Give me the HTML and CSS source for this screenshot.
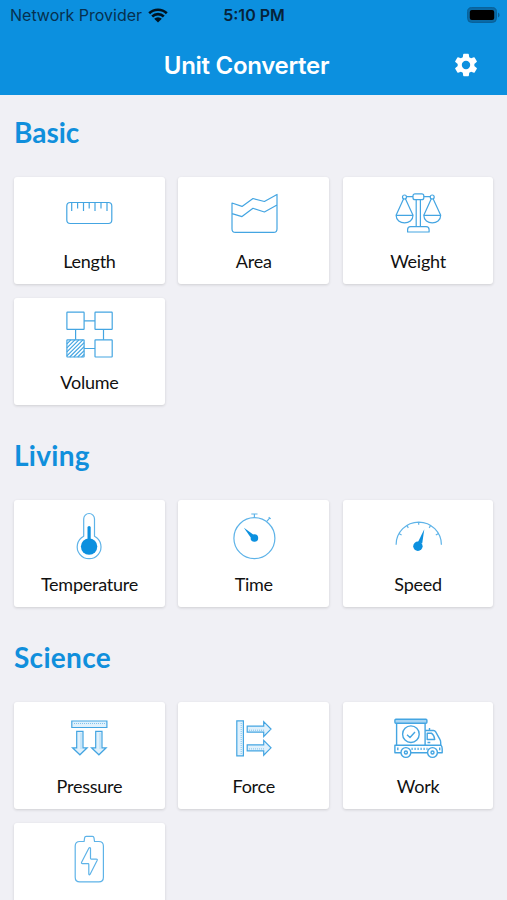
FILE: index.html
```
<!DOCTYPE html>
<html lang="en">

<head>
    <meta charset="UTF-8">
    <meta name="viewport" content="width=device-width, initial-scale=1">
    <title>Unit Converter</title>
    <link rel="stylesheet" href="styles.css">
</head>

<body>
    <header class="header">
        <div class="status-bar">
            <div class="carrier">
                <span class="carrier-name">Network Provider</span>
                <svg class="wifi" viewBox="0 0 20 15">
                    <path d="M1.2 5.3a12.6 12.6 0 0 1 17.6 0M4.2 8.5a8.3 8.3 0 0 1 11.6 0" />
                    <path class="solid" d="M6.2 10.8a5.4 5.4 0 0 1 7.6 0L10 14.6z" />
                </svg>
            </div>
            <span class="clock">5:10 PM</span>
            <svg class="battery" viewBox="0 0 33 16">
                <rect class="battery-case" x=".6" y=".6" width="28.8" height="14.8" rx="4" />
                <rect x="2.8" y="2.9" width="24.4" height="10.2" rx="2" />
                <path class="battery-tip" d="M31 5.6q1.6.8 1.6 2.4T31 10.4z" />
            </svg>
        </div>
        <div class="nav-bar">
            <h1 class="title">Unit Converter</h1>
            <svg class="gear" viewBox="0 0 24 24">
                <path d="M19.14 12.94c.04-.3.06-.61.06-.94s-.02-.64-.07-.94l2.03-1.58a.49.49 0 0 0 .12-.61l-1.92-3.32a.49.49 0 0 0-.59-.22l-2.39.96a7 7 0 0 0-1.62-.94l-.36-2.54a.48.48 0 0 0-.48-.41h-3.84a.47.47 0 0 0-.47.41l-.36 2.54c-.59.24-1.13.57-1.62.94l-2.39-.96a.48.48 0 0 0-.59.22L2.74 8.87a.48.48 0 0 0 .12.61l2.03 1.58a6.6 6.6 0 0 0 0 1.88l-2.03 1.58a.49.49 0 0 0-.12.61l1.92 3.32c.12.22.37.29.59.22l2.39-.96c.5.38 1.03.7 1.62.94l.36 2.54c.05.24.24.41.48.41h3.84c.24 0 .44-.17.47-.41l.36-2.54a7 7 0 0 0 1.62-.94l2.39.96c.22.08.47 0 .59-.22l1.92-3.32a.47.47 0 0 0-.12-.61zM12 15.6a3.6 3.6 0 1 1 0-7.2 3.6 3.6 0 0 1 0 7.2z" />
            </svg>
        </div>
    </header>

    <main class="content">
        <section>
            <h2 class="heading">Basic</h2>
            <div class="cards">
                <div class="card">
                    <svg class="icon" viewBox="0 0 50 50">
                        <rect x="2.8" y="14.5" width="45" height="21" rx="3.5" />
                        <path d="M7.7 14.5v8.5M13.6 14.5v6M19.5 14.5v8.5M25.2 14.5v6M31 14.5v8.5M37 14.5v6M43 14.5v8.5" />
                    </svg>
                    <span class="label">Length</span>
                </div>
                <div class="card">
                    <svg class="icon" viewBox="0 0 50 50">
                        <path d="M3 15l10 3.4 11-7.9 11.4 3L48 6.4v34.5q0 3.5-3.5 3.5h-38Q3 44.4 3 40.9zM3 25.6l10 3 11-8.3 11.4 3.7L48 17" />
                    </svg>
                    <span class="label">Area</span>
                </div>
                <div class="card">
                    <svg class="icon" viewBox="0 0 50 50">
                        <rect x="20" y="5.8" width="10.8" height="5.9" rx="2" />
                        <circle cx="11.5" cy="9" r="2" />
                        <circle cx="39.2" cy="9" r="2" />
                        <path d="M13.5 8.7H20M30.8 8.7h6.4M10.6 10.8L3.1 27.3M12.4 10.8l7.6 16.5M38.3 10.8l-7.5 16.5M40.1 10.8l7.6 16.5" />
                        <path d="M3.1 27.3H20c0 10-16.9 10-16.9 0zM30.8 27.3h16.9c0 10-16.9 10-16.9 0z" />
                        <path d="M23.2 11.7v27M27.4 11.7v27M14.6 44v-2.3q0-3 3-3h15.5q3 0 3 3V44z" />
                    </svg>
                    <span class="label">Weight</span>
                </div>
                <div class="card">
                    <svg class="icon" viewBox="0 0 50 50">
                        <rect x="2.9" y="3.2" width="17.2" height="17.2" rx=".5" />
                        <rect x="31" y="3.2" width="17.2" height="17.2" rx=".5" />
                        <rect x="2.9" y="30.8" width="17.2" height="17.2" rx=".5" />
                        <rect x="31" y="30.8" width="17.2" height="17.2" rx=".5" />
                        <path d="M20.1 11.8H31M20.1 39.5H31M11.6 20.4v10.4M39.5 20.4v10.4" />
                        <path d="M2.9 34.8l4-4M2.9 38.8l8-8M2.9 42.8l12-12M2.9 46.8l16-16M5.7 48l14.4-14.4M9.7 48l10.4-10.4M13.7 48l6.4-6.4M17.5 48l2.6-2.6" />
                    </svg>
                    <span class="label">Volume</span>
                </div>
            </div>
        </section>

        <section>
            <h2 class="heading wide">Living</h2>
            <div class="cards">
                <div class="card">
                    <svg class="icon thin" viewBox="0 0 50 50">
                        <path d="M19.7 25.2V7.9a5.4 5.4 0 0 1 10.8 0v17.3a11.9 11.9 0 1 1-10.8 0z" />
                        <circle class="solid" cx="25.1" cy="35.6" r="8.2" />
                        <path class="solid" d="M23.5 30V16.5a1.6 1.6 0 0 1 3.2 0V30z" />
                    </svg>
                    <span class="label">Temperature</span>
                </div>
                <div class="card">
                    <svg class="icon thin" viewBox="0 0 50 50">
                        <circle cx="25.4" cy="27.2" r="20.5" />
                        <path d="M22.3 3h6.2M25.4 3v3.7M37.8 10.4l3-3.5M39.7 6.3l2 1.6" />
                        <circle class="solid" cx="25.4" cy="27" r="3.8" />
                        <path class="solid" d="M14.9 16.8l9.3 6.7-2.7 2.8z" />
                    </svg>
                    <span class="label">Time</span>
                </div>
                <div class="card">
                    <svg class="icon thin" viewBox="0 0 50 50">
                        <path d="M3.1 33.7a22.4 22.4 0 0 1 45.3 0M25.7 10.8v3M13.8 14.2l1.5 2.7M37.7 14.2l-1.5 2.7M5.8 22.5l2.8 1.5M45.6 22.5l-2.8 1.5" />
                        <circle class="solid" cx="24.9" cy="35.3" r="4.7" />
                        <path class="solid" d="M31.3 18.2l-2.1 14.3-4.2-1.6z" />
                    </svg>
                    <span class="label">Speed</span>
                </div>
            </div>
        </section>

        <section>
            <h2 class="heading wide">Science</h2>
            <div class="cards">
                <div class="card">
                    <svg class="icon tinted" viewBox="0 0 50 50">
                        <path d="M7.8 8h35.1v6.5H7.8zM12.7 18.4H19v16.4h4.2l-7.3 7-7.4-7h4.2zM31.7 18.4H38v16.4h4.2l-7.3 7-7.4-7h4.2z" />
                        <path class="dots" d="M10 10.5h31M17 20.5V36M36 20.5V36" />
                    </svg>
                    <span class="label">Pressure</span>
                </div>
                <div class="card">
                    <svg class="icon tinted" viewBox="0 0 50 50">
                        <path d="M7.8 7.9h6.6v35H7.8zM18.2 13.1h16.5V8.7l7.3 7.4-7.3 7.4v-4.3H18.2zM18.2 31.8h16.5v-4.4l7.3 7.4-7.3 7.4v-4.3H18.2z" />
                        <path class="dots" d="M12.2 10v31M20 17.2h16M20 35.9h16" />
                    </svg>
                    <span class="label">Force</span>
                </div>
                <div class="card">
                    <svg class="icon truck" viewBox="0 0 50 50">
                        <path d="M3.6 10.3v22M32.1 10.3v22M1.9 32.3H48q1.2 1 1.2 3.8v3.6H1.9z" />
                        <rect class="roof" x="1.9" y="6.3" width="32" height="4" rx="1" />
                        <circle cx="17.9" cy="21.2" r="8.3" />
                        <path d="M14 21.8l3 2.7 5-5.4M32.1 17.5h8.3q1.5 0 2.3 1.4l4.3 7.8q.7 1.2.7 3v2.6M36.5 17.5V15M34.2 20.2h4.2q2.8 1.8 3.3 6.3h-7.5zM34.5 29.5h2.8" />
                        <path class="marks" d="M18.5 35.8h16" />
                        <path d="M4.8 34.5v2.8M46.7 34.5v2.8" />
                        <circle class="wheel" cx="12.9" cy="39.5" r="4.9" />
                        <circle class="wheel" cx="39.5" cy="39.5" r="4.9" />
                        <circle cx="12.9" cy="39.5" r="1.5" />
                        <circle cx="39.5" cy="39.5" r="1.5" />
                    </svg>
                    <span class="label">Work</span>
                </div>
                <div class="card">
                    <svg class="icon thin" viewBox="0 0 50 50">
                        <path d="M20.1 7.5l.5-3.7q.2-1.4 1.6-1.4h6.2q1.4 0 1.6 1.4l.5 3.7h4.3q4.6 0 4.6 4.6v31.2q0 4.6-4.6 4.6h-19q-4.6 0-4.6-4.6V12.1q0-4.6 4.6-4.6z" />
                        <path d="M24.8 14.2l-7.2 14q-.6 1.4.9 1.4h5.6q.7 0 .7.8v9.8q.3 1.3 1.2.2l7.1-14q.6-1.3-.8-1.3h-5q-.8 0-.8-.8V14.4q-.5-1.4-1.7-.2z" />
                    </svg>
                </div>
            </div>
        </section>
    </main>
</body>

</html>
```

FILE: styles.css
```
* {
    box-sizing: border-box;
}

body {
    margin: 0;
    height: 900px;
    overflow: hidden;
    background: #f0f0f5;
    font-family: Lato, sans-serif;
    color: #111;
}

/* Header */
.header {
    height: 95px;
    background: #0c90df;
    font-family: Inter, sans-serif;
}

.status-bar {
    display: grid;
    grid-template-columns: 1fr auto 1fr;
    align-items: center;
    height: 30px;
    padding: 0 7px 0 10px;
    color: #06304f;
}

.carrier {
    display: flex;
    align-items: center;
    gap: 6px;
}

.carrier-name {
    font-size: 16px;
    white-space: nowrap;
}

.wifi {
    width: 20px;
    height: 15px;
    fill: none;
    stroke: #001320;
    stroke-width: 2.6;
}

.wifi .solid {
    fill: #001320;
    stroke: none;
}

.clock {
    padding-right: 2px;
    font-size: 16px;
    font-weight: 600;
    color: #06233a;
}

.battery {
    justify-self: end;
    width: 33px;
    height: 16px;
}

.battery-case {
    fill: #0a6ba8;
    stroke: #0a5f96;
}

.battery-tip {
    fill: #0a5f96;
}

.nav-bar {
    display: grid;
    grid-template-columns: 1fr auto 1fr;
    align-items: center;
    height: 70px;
    padding: 0 27px 0 13px;
}

.title {
    grid-column: 2;
    margin: 0;
    font-size: 24px;
    font-weight: 600;
    letter-spacing: -0.3px;
    color: #fff;
}

.gear {
    justify-self: end;
    width: 28px;
    height: 28px;
    fill: #fff;
}

/* Sections */
.content {
    padding: 0 13.5px 0 14px;
}

.heading {
    height: 81.5px;
    margin: 0;
    padding-top: 19px;
    font-size: 28px;
    line-height: 36px;
    font-weight: 700;
    color: #108fdc;
}

.heading.wide {
    letter-spacing: 0.3px;
}

.cards {
    display: grid;
    grid-template-columns: repeat(3, 1fr);
    gap: 13.5px;
    margin-bottom: 13.2px;
}

.card {
    display: flex;
    flex-direction: column;
    align-items: center;
    height: 107.5px;
    padding-top: 11.5px;
    background: #fff;
    border-radius: 3px;
    box-shadow: 0 1px 3px rgba(0, 0, 0, 0.14);
}

.label {
    margin-top: 11px;
    font-size: 18px;
    line-height: 24px;
    letter-spacing: -0.25px;
    white-space: nowrap;
}

/* Icons */
.icon {
    width: 50px;
    height: 50px;
    fill: none;
    stroke: #44a5e2;
    stroke-width: 1.2;
    stroke-linejoin: round;
}

.icon.thin {
    stroke: #5eb3e8;
}

.icon .solid {
    fill: #0c90df;
    stroke: none;
}

.icon.tinted {
    fill: #e0f1fc;
    stroke-linejoin: miter;
}

.icon .dots {
    fill: none;
    stroke: #7dc2ed;
    stroke-width: 1;
    stroke-dasharray: 1 1;
}

.icon.truck {
    stroke-width: 1.4;
}

.icon .roof {
    fill: #a9d6f4;
}

.icon .marks {
    stroke-width: 2.2;
    stroke-dasharray: 1.2 1.8;
}

.icon .wheel {
    fill: #fff;
}
```
